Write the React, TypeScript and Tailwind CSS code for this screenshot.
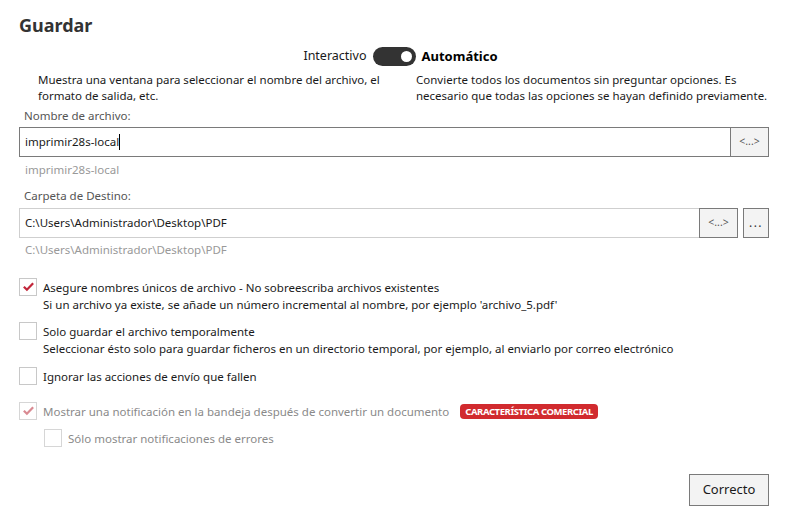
import React, { useState } from 'react';

const font = { fontFamily: '"Segoe UI", "Noto Sans", "Open Sans", sans-serif' };

type CheckProps = {
  checked: boolean;
  disabled?: boolean;
  label: string;
  hint?: string;
  badge?: string;
  onToggle?: () => void;
};

const CheckRow: React.FC<CheckProps> = ({ checked, disabled, label, hint, badge, onToggle }) => (
  <div className="flex items-start gap-[6px]">
    <button
      onClick={onToggle}
      className={`w-[18px] h-[18px] shrink-0 border bg-white flex items-center justify-center ${disabled ? 'border-[#d6d6d6]' : 'border-[#c8c8c8]'}`}
    >
      {checked && (
        <svg viewBox="0 0 14 14" className="w-[13px] h-[13px]">
          <path
            d="M2 7.2 L5.3 10.5 L12 3.5"
            fill="none"
            stroke={disabled ? '#d98a92' : '#c2263a'}
            strokeWidth="2.4"
          />
        </svg>
      )}
    </button>
    <div className="flex flex-col pt-px">
      <div className="flex items-center gap-[11px]">
        <span className={`text-[11.5px] leading-[17px] ${disabled ? 'text-[#8a8a8a]' : 'text-[#1a1a1a]'}`}>{label}</span>
        {badge && (
          <span className="bg-[#d12a2e] text-white text-[9.5px] font-bold leading-[15px] px-[5px] rounded-[4px] tracking-[-0.4px]">
            {badge}
          </span>
        )}
      </div>
      {hint && <span className="text-[11.5px] leading-[17px] text-[#1a1a1a]">{hint}</span>}
    </div>
  </div>
);

export default function App() {
  const [auto, setAuto] = useState(true);
  const [unique, setUnique] = useState(true);
  const [temp, setTemp] = useState(false);
  const [ignore, setIgnore] = useState(false);

  return (
    <div className="w-[785px] h-[520px] bg-white pl-[19px] pr-[16px] pt-[12px] text-[#1a1a1a]" style={font}>
      <h1 className="text-[18px] font-bold leading-[26px] text-[#333]">Guardar</h1>

      <div className="grid grid-cols-[1fr_auto_1fr] items-center gap-[6px] mt-[9px]">
        <span className="justify-self-end text-[12.5px] text-[#1a1a1a]">Interactivo</span>
        <button
          onClick={() => setAuto(!auto)}
          className={`w-[43px] h-[19px] rounded-full bg-[#333] flex items-center px-[4px] ${auto ? 'justify-end' : 'justify-start'}`}
        >
          <span className="w-[11px] h-[11px] rounded-full bg-white" />
        </button>
        <span className="justify-self-start text-[13px] font-bold text-black">Automático</span>
      </div>

      <div className="grid grid-cols-2 mt-[5px] text-[11.5px] leading-[16px]">
        <p className="pl-[19px] pr-[2px]">Muestra una ventana para seleccionar el nombre del archivo, el formato de salida, etc.</p>
        <p className="pl-[22px]">Convierte todos los documentos sin preguntar opciones. Es necesario que todas las opciones se hayan definido previamente.</p>
      </div>

      <div className="text-[11.5px] leading-[17px] text-[#555] pl-[5px] mt-[3px]">Nombre de archivo:</div>
      <div className="flex mt-[3px] h-[30px]">
        <div className="flex-1 border border-[#7a7a7a] flex items-center px-[5px] text-[11.5px]">
          imprimir28s-local<span className="w-px h-[16px] bg-black" />
        </div>
        <button className="w-[38px] border border-l-0 border-[#7a7a7a] bg-[#f3f3f3] text-[10.5px] text-[#555]">&lt;...&gt;</button>
      </div>
      <div className="text-[11.5px] leading-[17px] text-[#999] pl-[6px] mt-[4px]">imprimir28s-local</div>

      <div className="text-[11.5px] leading-[17px] text-[#555] pl-[5px] mt-[9px]">Carpeta de Destino:</div>
      <div className="flex mt-[4px] h-[30px]">
        <div className="flex-1 border border-r-0 border-[#cfcfcf] flex items-center px-[5px] text-[11.5px]">
          C:\Users\Administrador\Desktop\PDF
        </div>
        <button className="w-[39px] border border-[#7a7a7a] bg-[#f3f3f3] text-[10.5px] text-[#555]">&lt;...&gt;</button>
        <button className="w-[26px] ml-[5px] border border-[#7a7a7a] bg-[#f3f3f3] text-[12px] tracking-[1.5px] text-[#333]">...</button>
      </div>
      <div className="text-[11.5px] leading-[17px] text-[#999] pl-[6px] mt-[3px]">C:\Users\Administrador\Desktop\PDF</div>

      <div className="flex flex-col mt-[20px]">
        <CheckRow
          checked={unique}
          onToggle={() => setUnique(!unique)}
          label="Asegure nombres únicos de archivo - No sobreescriba archivos existentes"
          hint="Si un archivo ya existe, se añade un número incremental al nombre, por ejemplo 'archivo_5.pdf'"
        />
        <div className="mt-[9px]">
          <CheckRow
            checked={temp}
            onToggle={() => setTemp(!temp)}
            label="Solo guardar el archivo temporalmente"
            hint="Seleccionar ésto solo para guardar ficheros en un directorio temporal, por ejemplo, al enviarlo por correo electrónico"
          />
        </div>
        <div className="mt-[10px]">
          <CheckRow checked={ignore} onToggle={() => setIgnore(!ignore)} label="Ignorar las acciones de envío que fallen" />
        </div>
        <div className="mt-[17px]">
          <CheckRow
            checked
            disabled
            label="Mostrar una notificación en la bandeja después de convertir un documento"
            badge="CARACTERÍSTICA COMERCIAL"
          />
        </div>
        <div className="mt-[9px] pl-[25px]">
          <CheckRow checked={false} disabled label="Sólo mostrar notificaciones de errores" />
        </div>
      </div>

      <div className="flex justify-end mt-[27px]">
        <button className="w-[80px] h-[32px] border border-[#7a7a7a] bg-[#f3f3f3] text-[13px] text-[#1a1a1a]">Correcto</button>
      </div>
    </div>
  );
}
